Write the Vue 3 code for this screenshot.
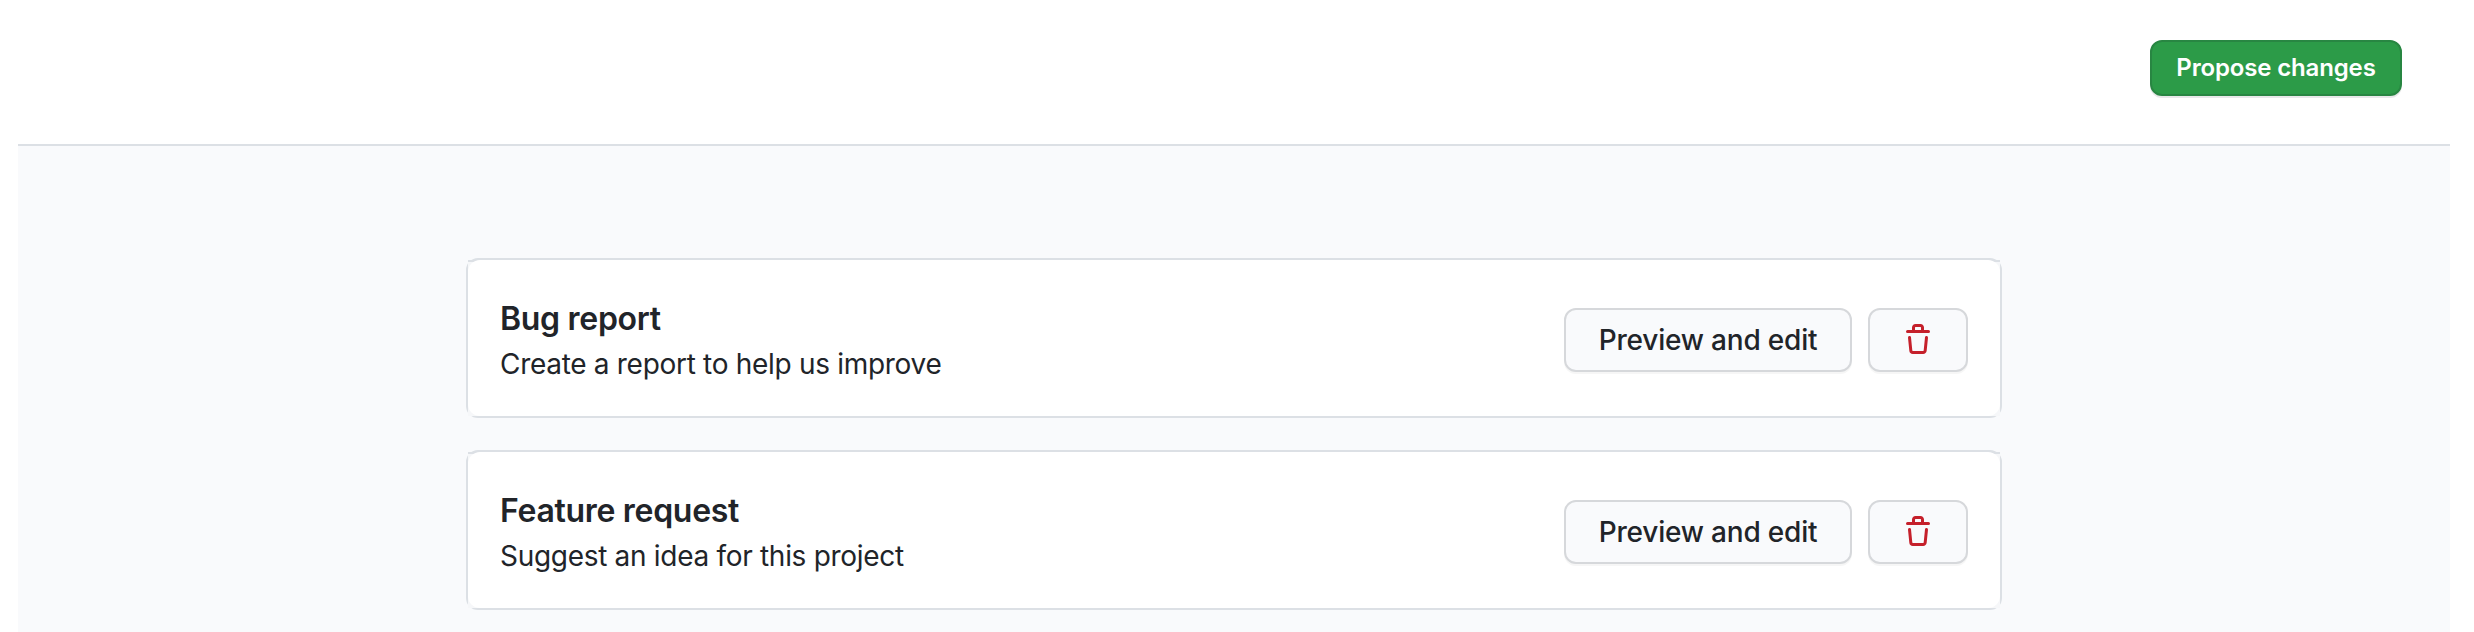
<script setup>
const templates = [
  { id: 'bug', title: 'Bug report', about: 'Create a report to help us improve' },
  { id: 'feature', title: 'Feature request', about: 'Suggest an idea for this project' },
]
</script>

<template>
  <div class="page">
    <header class="topbar">
      <button class="btn btn-primary" type="button">Propose changes</button>
    </header>
    <main class="panel">
      <section v-for="item in templates" :key="item.id" class="card">
        <div class="card-fill">
          <div class="card-body">
            <div class="info">
              <h3 class="title">{{ item.title }}</h3>
              <p class="about">{{ item.about }}</p>
            </div>
            <button class="btn btn-edit" type="button">Preview and edit</button>
            <button class="btn btn-trash" type="button" aria-label="Delete template">
              <svg width="32" height="32" viewBox="0 0 16 16" fill="currentColor">
                <path fill-rule="evenodd" d="M6.5 1.75a.25.25 0 01.25-.25h2.5a.25.25 0 01.25.25V3h-3V1.75zm4.5 0V3h2.25a.75.75 0 010 1.5H2.75a.75.75 0 010-1.5H5V1.75C5 .784 5.784 0 6.75 0h2.5C10.216 0 11 .784 11 1.75zM4.496 6.675a.75.75 0 10-1.492.15l.66 6.6A1.75 1.75 0 005.405 15h5.19c.9 0 1.652-.681 1.741-1.576l.66-6.6a.75.75 0 00-1.492-.149l-.66 6.6a.25.25 0 01-.249.225h-5.19a.25.25 0 01-.249-.225l-.66-6.6z" />
              </svg>
            </button>
          </div>
        </div>
      </section>
    </main>
  </div>
</template>

<style>
body {
  margin: 0;
  background: #fff;
}
</style>

<style scoped>
.page {
  box-sizing: border-box;
  height: 632px;
  padding: 0 24px 0 18px;
  overflow: hidden;
  display: flex;
  flex-direction: column;
  font-family: Inter, "Liberation Sans", sans-serif;
  color: #212429;
}
.topbar {
  box-sizing: border-box;
  height: 144px;
  padding: 40px 48px 0 0;
  display: flex;
  justify-content: flex-end;
  align-items: flex-start;
}
.panel {
  flex: 1;
  border-top: 2px solid #dce0e5;
  background: #f9fafc;
  padding-top: 112px;
  display: flex;
  flex-direction: column;
  align-items: center;
  gap: 32px;
}
.card {
  box-sizing: border-box;
  flex: none;
  width: 1536px;
  height: 160px;
  border: 2px solid #dce0e5;
  border-radius: 12px;
}
.card-fill {
  box-sizing: border-box;
  height: 156px;
  border-top: 2px solid #dce0e5;
  background: #f6f7f9;
}
.card-body {
  box-sizing: border-box;
  height: 156px;
  margin-top: -2px;
  padding: 4px 32px 0;
  border-radius: 12px;
  background: #fff;
  display: flex;
  align-items: center;
  gap: 16px;
}
.info {
  flex: 1;
  white-space: nowrap;
}
.title {
  margin: 0;
  font-size: 32px;
  line-height: 48px;
  font-weight: 600;
  letter-spacing: -0.3px;
}
.about {
  margin: 0;
  font-size: 28px;
  line-height: 42px;
  letter-spacing: -0.3px;
}
.btn {
  box-sizing: border-box;
  margin: 0;
  padding: 0;
  display: flex;
  align-items: center;
  justify-content: center;
  font-family: inherit;
  font-weight: 500;
  border: 2px solid #d6d8db;
  border-radius: 12px;
  background: #f9fafc;
  color: #212429;
  white-space: nowrap;
  box-shadow: 0 2px 0 rgba(27, 31, 35, 0.04);
}
.btn-primary {
  width: 252px;
  height: 56px;
  padding-bottom: 2px;
  font-size: 24px;
  font-weight: 600;
  letter-spacing: -0.15px;
  color: #fff;
  background: #2c9b48;
  border-color: #288642;
  box-shadow: 0 2px 0 rgba(27, 31, 35, 0.1);
}
.btn-edit {
  width: 288px;
  height: 64px;
  font-size: 28px;
  letter-spacing: -0.2px;
}
.btn-trash {
  width: 100px;
  height: 64px;
  color: #c5202b;
}
</style>
